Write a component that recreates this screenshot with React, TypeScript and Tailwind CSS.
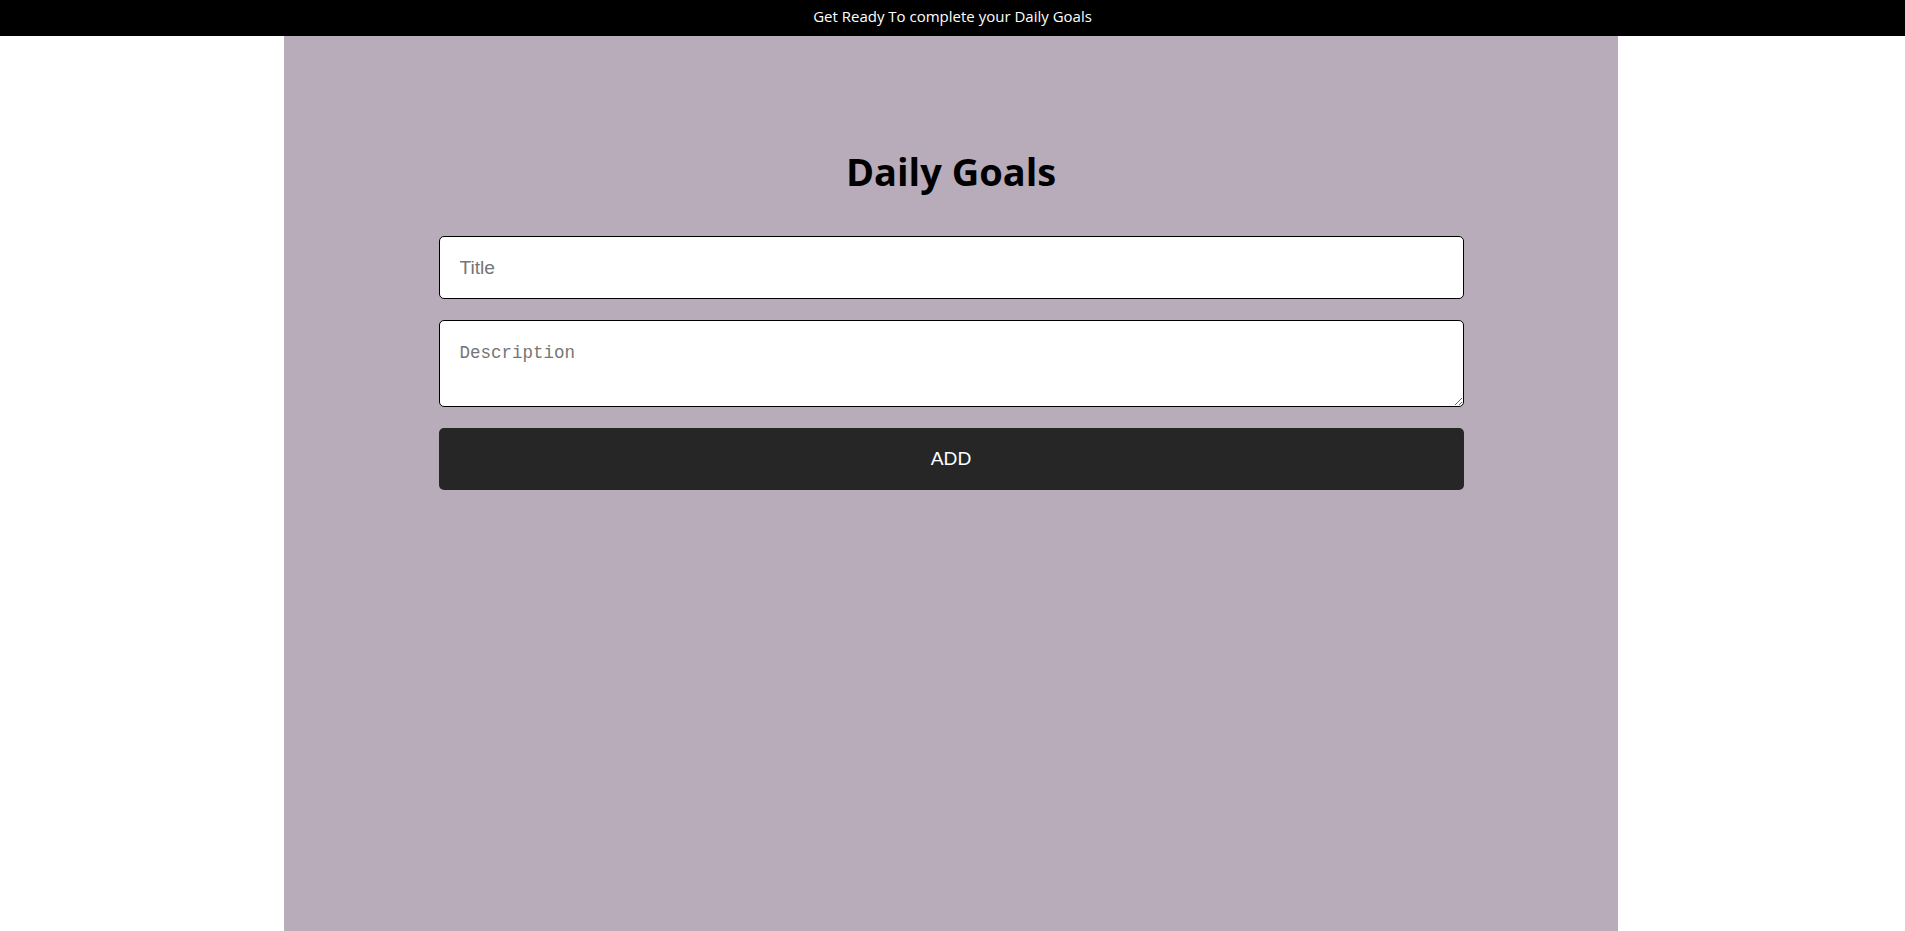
export default function App() {
  return (
    <div className="min-h-screen bg-white flex flex-col" style={{ fontFamily: '"Open Sans", "Noto Sans", sans-serif' }}>
      {/* Top banner */}
      <div className="h-[36px] bg-black text-white text-center text-[15px] leading-[20px] pt-[6px]">
        Get Ready To complete your Daily Goals
      </div>

      {/* Main panel */}
      <main className="w-[1334px] ml-[284px] flex-1 bg-[#b8acba] pt-[111px]">
        <h1 className="text-center text-[38px] leading-[48px] font-bold text-black">Daily Goals</h1>

        <form className="w-[1025px] mx-auto mt-[41px] flex flex-col gap-[21px]" onSubmit={(e) => e.preventDefault()}>
          <input
            type="text"
            placeholder="Title"
            className="h-[63px] w-full bg-white border border-black rounded-[5px] px-[20px] text-[19.2px] placeholder:text-[#757575] outline-none"
            style={{ fontFamily: '"Liberation Sans", Arial, sans-serif' }}
          />
          <textarea
            placeholder="Description"
            className="h-[87px] w-full bg-white border border-black rounded-[5px] px-[20px] pt-[19px] text-[17.5px] placeholder:text-[#757575] outline-none"
            style={{ fontFamily: '"Liberation Mono", "DejaVu Sans Mono", monospace' }}
          />
          <button
            type="submit"
            className="h-[62px] w-full bg-[#262626] text-white rounded-[5px] text-[19.2px]"
            style={{ fontFamily: '"Liberation Sans", Arial, sans-serif' }}
          >
            ADD
          </button>
        </form>
      </main>
    </div>
  );
}
